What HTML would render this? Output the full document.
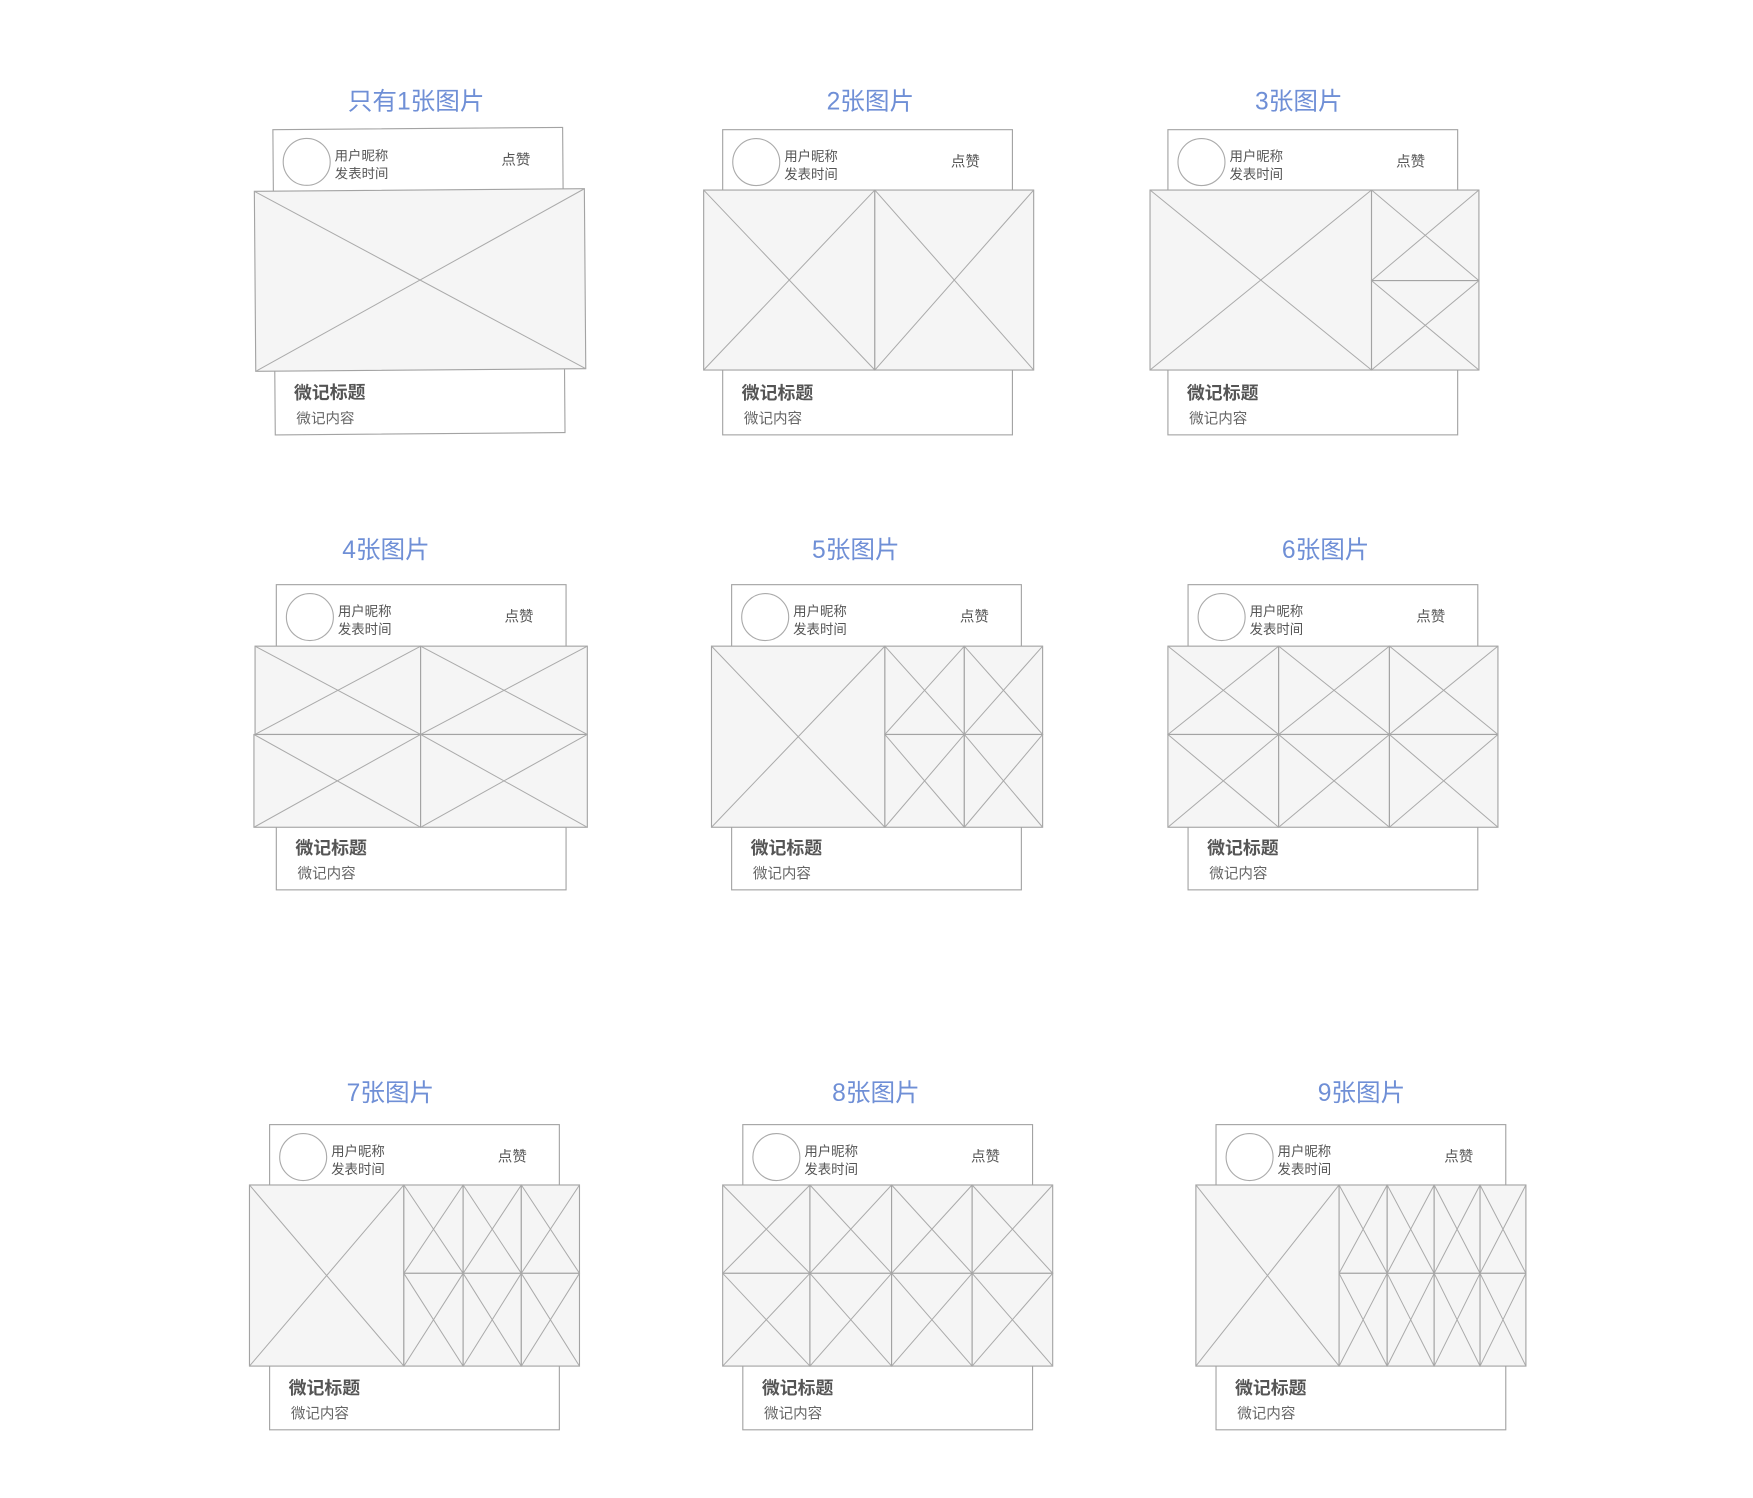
<!DOCTYPE html>
<html><head><meta charset="utf-8"><style>
html,body{margin:0;padding:0;background:#fff;}
svg{display:block}
text{font-family:"Liberation Sans","Noto Sans CJK SC",sans-serif;}
.t{fill:#6f8fd6;font-size:22px;text-anchor:middle}
.b{fill:#fff;stroke:#a3a3a3;stroke-width:1}
.c{fill:#f5f5f5;stroke:#a3a3a3;stroke-width:1}
.d{stroke:#aaa;stroke-width:0.9;fill:none}
.s{fill:#555;font-size:12px}
.z{fill:#555;font-size:13px}
.h{fill:#555;font-size:16px;font-weight:bold}
.n{fill:#666;font-size:13px}
</style></head><body>
<svg width="1753" height="1498" viewBox="0 0 1567 1340" preserveAspectRatio="none" xmlns="http://www.w3.org/2000/svg">
<defs>
<g id="hd">
<rect class="b" x="0" y="0" width="259" height="56"/>
<circle cx="30" cy="29" r="21" fill="#fff" stroke="#aaa"/>
<text class="s" x="55" y="28">用户昵称</text>
<text class="s" x="55" y="44">发表时间</text>
<text class="z" x="204" y="33">点赞</text>
<rect class="b" x="0" y="214" width="259" height="59"/>
<text class="h" x="17" y="241">微记标题</text>
<text class="n" x="19" y="263">微记内容</text>
</g>
</defs>

<text class="t" x="372" y="98">只有1张图片</text>
<text class="t" x="778" y="98">2张图片</text>
<text class="t" x="1161" y="98">3张图片</text>
<text class="t" x="345" y="499">4张图片</text>
<text class="t" x="765" y="499">5张图片</text>
<text class="t" x="1185" y="499">6张图片</text>
<text class="t" x="349" y="985">7张图片</text>
<text class="t" x="783" y="985">8张图片</text>
<text class="t" x="1217" y="985">9张图片</text>

<g transform="rotate(-0.45 375 252)">
<use href="#hd" x="245" y="115"/>
<g transform="translate(228,170)"><rect class="c" x="0" y="0" width="295" height="161"/><path class="d" d="M0 0L295 161M295 0L0 161"/></g>
</g>

<use href="#hd" x="646" y="116"/>
<g transform="translate(629,170)">
<rect class="c" x="0" y="0" width="153" height="161"/><path class="d" d="M0 0L153 161M153 0L0 161"/>
<rect class="c" x="153" y="0" width="142" height="161"/><path class="d" d="M153 0L295 161M295 0L153 161"/>
</g>

<use href="#hd" x="1044" y="116"/>
<g transform="translate(1028,170)">
<rect class="c" x="0" y="0" width="198" height="161"/><path class="d" d="M0 0L198 161M198 0L0 161"/>
<rect class="c" x="198" y="0" width="96" height="81"/><path class="d" d="M198 0L294 81M294 0L198 81"/>
<rect class="c" x="198" y="81" width="96" height="80"/><path class="d" d="M198 81L294 161M294 81L198 161"/>
</g>

<use href="#hd" x="247" y="523"/>
<g transform="translate(228,578)">
<rect class="c" x="0" y="0" width="148" height="79"/><path class="d" d="M0 0L148 79M148 0L0 79"/>
<rect class="c" x="148" y="0" width="149" height="79"/><path class="d" d="M148 0L297 79M297 0L148 79"/>
<rect class="c" x="-1" y="79" width="149" height="83"/><path class="d" d="M-1 79L148 162M148 79L-1 162"/>
<rect class="c" x="148" y="79" width="149" height="83"/><path class="d" d="M148 79L297 162M297 79L148 162"/>
</g>

<use href="#hd" x="654" y="523"/>
<g transform="translate(636,578)">
<rect class="c" x="0" y="0" width="155" height="162"/><path class="d" d="M0 0L155 162M155 0L0 162"/>
<rect class="c" x="155" y="0" width="71" height="79"/><path class="d" d="M155 0L226 79M226 0L155 79"/>
<rect class="c" x="226" y="0" width="70" height="79"/><path class="d" d="M226 0L296 79M296 0L226 79"/>
<rect class="c" x="155" y="79" width="71" height="83"/><path class="d" d="M155 79L226 162M226 79L155 162"/>
<rect class="c" x="226" y="79" width="70" height="83"/><path class="d" d="M226 79L296 162M296 79L226 162"/>
</g>

<use href="#hd" x="1062" y="523"/>
<g transform="translate(1044,578)">
<rect class="c" x="0" y="0" width="99" height="79"/><path class="d" d="M0 0L99 79M99 0L0 79"/>
<rect class="c" x="99" y="0" width="99" height="79"/><path class="d" d="M99 0L198 79M198 0L99 79"/>
<rect class="c" x="198" y="0" width="97" height="79"/><path class="d" d="M198 0L295 79M295 0L198 79"/>
<rect class="c" x="0" y="79" width="99" height="83"/><path class="d" d="M0 79L99 162M99 79L0 162"/>
<rect class="c" x="99" y="79" width="99" height="83"/><path class="d" d="M99 79L198 162M198 79L99 162"/>
<rect class="c" x="198" y="79" width="97" height="83"/><path class="d" d="M198 79L295 162M295 79L198 162"/>
</g>

<use href="#hd" x="241" y="1006"/>
<g transform="translate(223,1060)">
<rect class="c" x="0" y="0" width="138" height="162"/><path class="d" d="M0 0L138 162M138 0L0 162"/>
<rect class="c" x="138" y="0" width="53" height="79"/><path class="d" d="M138 0L191 79M191 0L138 79"/>
<rect class="c" x="191" y="0" width="52" height="79"/><path class="d" d="M191 0L243 79M243 0L191 79"/>
<rect class="c" x="243" y="0" width="52" height="79"/><path class="d" d="M243 0L295 79M295 0L243 79"/>
<rect class="c" x="138" y="79" width="53" height="83"/><path class="d" d="M138 79L191 162M191 79L138 162"/>
<rect class="c" x="191" y="79" width="52" height="83"/><path class="d" d="M191 79L243 162M243 79L191 162"/>
<rect class="c" x="243" y="79" width="52" height="83"/><path class="d" d="M243 79L295 162M295 79L243 162"/>
</g>

<use href="#hd" x="664" y="1006"/>
<g transform="translate(646,1060)">
<rect class="c" x="0" y="0" width="78" height="79"/><path class="d" d="M0 0L78 79M78 0L0 79"/>
<rect class="c" x="78" y="0" width="73" height="79"/><path class="d" d="M78 0L151 79M151 0L78 79"/>
<rect class="c" x="151" y="0" width="72" height="79"/><path class="d" d="M151 0L223 79M223 0L151 79"/>
<rect class="c" x="223" y="0" width="72" height="79"/><path class="d" d="M223 0L295 79M295 0L223 79"/>
<rect class="c" x="0" y="79" width="78" height="83"/><path class="d" d="M0 79L78 162M78 79L0 162"/>
<rect class="c" x="78" y="79" width="73" height="83"/><path class="d" d="M78 79L151 162M151 79L78 162"/>
<rect class="c" x="151" y="79" width="72" height="83"/><path class="d" d="M151 79L223 162M223 79L151 162"/>
<rect class="c" x="223" y="79" width="72" height="83"/><path class="d" d="M223 79L295 162M295 79L223 162"/>
</g>

<use href="#hd" x="1087" y="1006"/>
<g transform="translate(1069,1060)">
<rect class="c" x="0" y="0" width="128" height="162"/><path class="d" d="M0 0L128 162M128 0L0 162"/>
<rect class="c" x="128" y="0" width="43" height="79"/><path class="d" d="M128 0L171 79M171 0L128 79"/>
<rect class="c" x="171" y="0" width="42" height="79"/><path class="d" d="M171 0L213 79M213 0L171 79"/>
<rect class="c" x="213" y="0" width="41" height="79"/><path class="d" d="M213 0L254 79M254 0L213 79"/>
<rect class="c" x="254" y="0" width="41" height="79"/><path class="d" d="M254 0L295 79M295 0L254 79"/>
<rect class="c" x="128" y="79" width="43" height="83"/><path class="d" d="M128 79L171 162M171 79L128 162"/>
<rect class="c" x="171" y="79" width="42" height="83"/><path class="d" d="M171 79L213 162M213 79L171 162"/>
<rect class="c" x="213" y="79" width="41" height="83"/><path class="d" d="M213 79L254 162M254 79L213 162"/>
<rect class="c" x="254" y="79" width="41" height="83"/><path class="d" d="M254 79L295 162M295 79L254 162"/>
</g>
</svg>
</body></html>
